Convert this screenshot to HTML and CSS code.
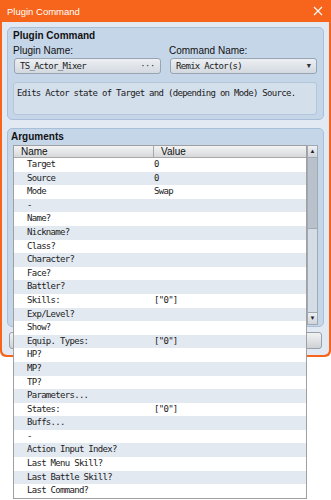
FILE: index.html
```html
<!DOCTYPE html>
<html lang="en">
<head>
  <meta charset="UTF-8" />
  <meta name="viewport" content="width=device-width, initial-scale=1" />
  <title>Plugin Command</title>
  <link rel="stylesheet" href="styles.css">
</head>
<body>

<div class="window">
  <div class="titlebar">
    <span>Plugin Command</span>
    <svg class="close" width="10" height="10" viewBox="0 0 10 10">
      <path d="M1 1 L9 9 M9 1 L1 9" stroke="#fff" stroke-width="1.1" fill="none" />
    </svg>
  </div>

  <div class="client">
    <section class="group cmd">
      <h3>Plugin Command</h3>
      <div class="fields">
        <div class="field">
          <label>Plugin Name:</label>
          <div class="input mono">TS_Actor_Mixer<span class="dots">···</span></div>
        </div>
        <div class="field">
          <label>Command Name:</label>
          <div class="input mono">Remix Actor(s)<span class="arrow">▼</span></div>
        </div>
      </div>
      <div class="desc mono">Edits Actor state of Target and (depending on Mode) Source.</div>
    </section>

    <section class="group args">
      <h3>Arguments</h3>
      <div class="grid">
        <div class="table">
          <div class="thead">
            <div class="th name">Name</div>
            <div class="th">Value</div>
          </div>
          <div class="rows mono">
            <div class="row"><span class="key">Target</span><span>0</span></div>
            <div class="row"><span class="key">Source</span><span>0</span></div>
            <div class="row"><span class="key">Mode</span><span>Swap</span></div>
            <div class="row"><span class="key">-</span><span></span></div>
            <div class="row"><span class="key">Name?</span><span></span></div>
            <div class="row"><span class="key">Nickname?</span><span></span></div>
            <div class="row"><span class="key">Class?</span><span></span></div>
            <div class="row"><span class="key">Character?</span><span></span></div>
            <div class="row"><span class="key">Face?</span><span></span></div>
            <div class="row"><span class="key">Battler?</span><span></span></div>
            <div class="row"><span class="key">Skills:</span><span>["0"]</span></div>
            <div class="row"><span class="key">Exp/Level?</span><span></span></div>
            <div class="row"><span class="key">Show?</span><span></span></div>
            <div class="row"><span class="key">Equip. Types:</span><span>["0"]</span></div>
            <div class="row"><span class="key">HP?</span><span></span></div>
            <div class="row"><span class="key">MP?</span><span></span></div>
            <div class="row"><span class="key">TP?</span><span></span></div>
            <div class="row"><span class="key">Parameters...</span><span></span></div>
            <div class="row"><span class="key">States:</span><span>["0"]</span></div>
            <div class="row"><span class="key">Buffs...</span><span></span></div>
            <div class="row"><span class="key">-</span><span></span></div>
            <div class="row"><span class="key">Action Input Index?</span><span></span></div>
            <div class="row"><span class="key">Last Menu Skill?</span><span></span></div>
            <div class="row"><span class="key">Last Battle Skill?</span><span></span></div>
            <div class="row"><span class="key">Last Command?</span><span></span></div>
          </div>
        </div>
        <div class="scrollbar">
          <div class="sb-btn">▲</div>
          <div class="sb-thumb"></div>
          <div class="sb-track"></div>
          <div class="sb-btn">▼</div>
        </div>
      </div>
    </section>

    <!-- labels sit under the open list, so they are left out -->
    <div class="buttons">
      <button></button>
      <button></button>
    </div>
  </div>
</div>

</body>
</html>
```

FILE: styles.css
```css
html, body {
  margin: 0;
  padding: 0;
  background: #ffffff;
  font-family: "Liberation Sans", Arial, sans-serif;
  font-size: 10px;
  color: #111;
}

body {
  min-height: 500px;
}

.window {
  width: 331px;
  height: 357px;
  box-sizing: border-box;
  background: #f6651b;
  padding: 0 2px 2px;
  border-radius: 0 0 6px 6px;
}

.titlebar {
  height: 22px;
  display: flex;
  align-items: center;
  justify-content: space-between;
  padding: 0 5px 0 5px;
  color: #fff;
  font-size: 9.5px;
}

.close {
  margin-right: 1px;
}

.client {
  height: 333px;
  box-sizing: border-box;
  background: #e2e9f2;
  border-radius: 0 0 5px 5px;
  padding: 5px 5px 0;
}

.mono {
  font-family: "DejaVu Sans Mono", "Liberation Mono", monospace;
  font-size: 9px;
  letter-spacing: -0.7px;
}

.group {
  background: #c6d6e9;
  border: 1px solid #a9bfd8;
  border-radius: 5px;
}

.group h3 {
  margin: 0;
  font-size: 10px;
  font-weight: bold;
  line-height: 12px;
}

.cmd {
  height: 93px;
  box-sizing: border-box;
  padding: 2px 6px 4px 5px;
}

.fields {
  display: flex;
  gap: 9px;
  margin-top: 3px;
  padding-left: 1px;
}

.field {
  flex: 1;
  display: flex;
  flex-direction: column;
  gap: 1px;
}

.field label {
  line-height: 12px;
  margin-left: -1px;
}

.input {
  height: 16px;
  box-sizing: border-box;
  border: 1px solid #98a4b2;
  border-radius: 3px;
  background: linear-gradient(#eceff3, #d3d9e0);
  display: flex;
  align-items: center;
  justify-content: space-between;
  padding: 0 5px 0 5px;
  color: #1a1a1a;
}

.input .dots {
  letter-spacing: 0;
  font-size: 8px;
}

.input .arrow {
  font-size: 7px;
  letter-spacing: 0;
  color: #333;
}

.desc {
  margin-top: 8px;
  height: 33px;
  box-sizing: border-box;
  background: #d4dfec;
  border: 1px solid #b5c6da;
  border-radius: 3px;
  padding: 4px 3px;
  line-height: 12px;
  color: #1a1a1a;
}

.args {
  margin-top: 8px;
  height: 199px;
  box-sizing: border-box;
  padding: 1px 5px 2px 5px;
}

.args h3 {
  line-height: 13px;
  margin-left: -2px;
}

.grid {
  display: flex;
  margin-top: 2px;
  height: 180px;
}

.table {
  width: 294px;
  position: relative;
  z-index: 1;
  align-self: flex-start;
  background: #fff;
  border: 1px solid #a0a0a0;
  border-top: none;
  box-sizing: border-box;
}

.thead {
  display: flex;
  height: 13px;
  box-sizing: border-box;
  border-top: 1px solid #a0a0a0;
  border-bottom: 1px solid #a8a8a8;
  background: linear-gradient(#f4f4f4, #d6d8db);
  font-size: 10px;
  line-height: 11px;
}

.th {
  padding-left: 7px;
}

.th.name {
  width: 132px;
  border-right: 1px solid #a8a8a8;
}

.row {
  display: flex;
  height: 13.6px;
  line-height: 13.6px;
  padding-left: 13px;
  color: #222;
}

.row:nth-child(even) {
  background: #e3e9f1;
}

.row .key {
  width: 127px;
}

.scrollbar {
  width: 11px;
  height: 180px;
  display: flex;
  flex-direction: column;
  background: #d4dce5;
  border: 1px solid #a0a8b2;
  box-sizing: border-box;
}

.sb-btn {
  height: 11px;
  font-size: 6px;
  line-height: 11px;
  text-align: center;
  color: #222;
  background: linear-gradient(#eef0f3, #cfd5dc);
  border-bottom: 1px solid #a0a8b2;
}

.sb-btn:last-child {
  border-bottom: none;
  border-top: 1px solid #a0a8b2;
}

.sb-thumb {
  height: 70px;
  background: #b9c2cc;
  border-bottom: 1px solid #a0a8b2;
}

.sb-track {
  flex: 1;
}

.buttons {
  display: flex;
  justify-content: space-between;
  margin-top: 5px;
  padding: 0 2px;
}

button {
  height: 17px;
  width: 80px;
  border: 1px solid #9aa0a8;
  border-radius: 3px;
  background: linear-gradient(#f2f2f2, #cfd2d6);
  padding: 0;
}
```
